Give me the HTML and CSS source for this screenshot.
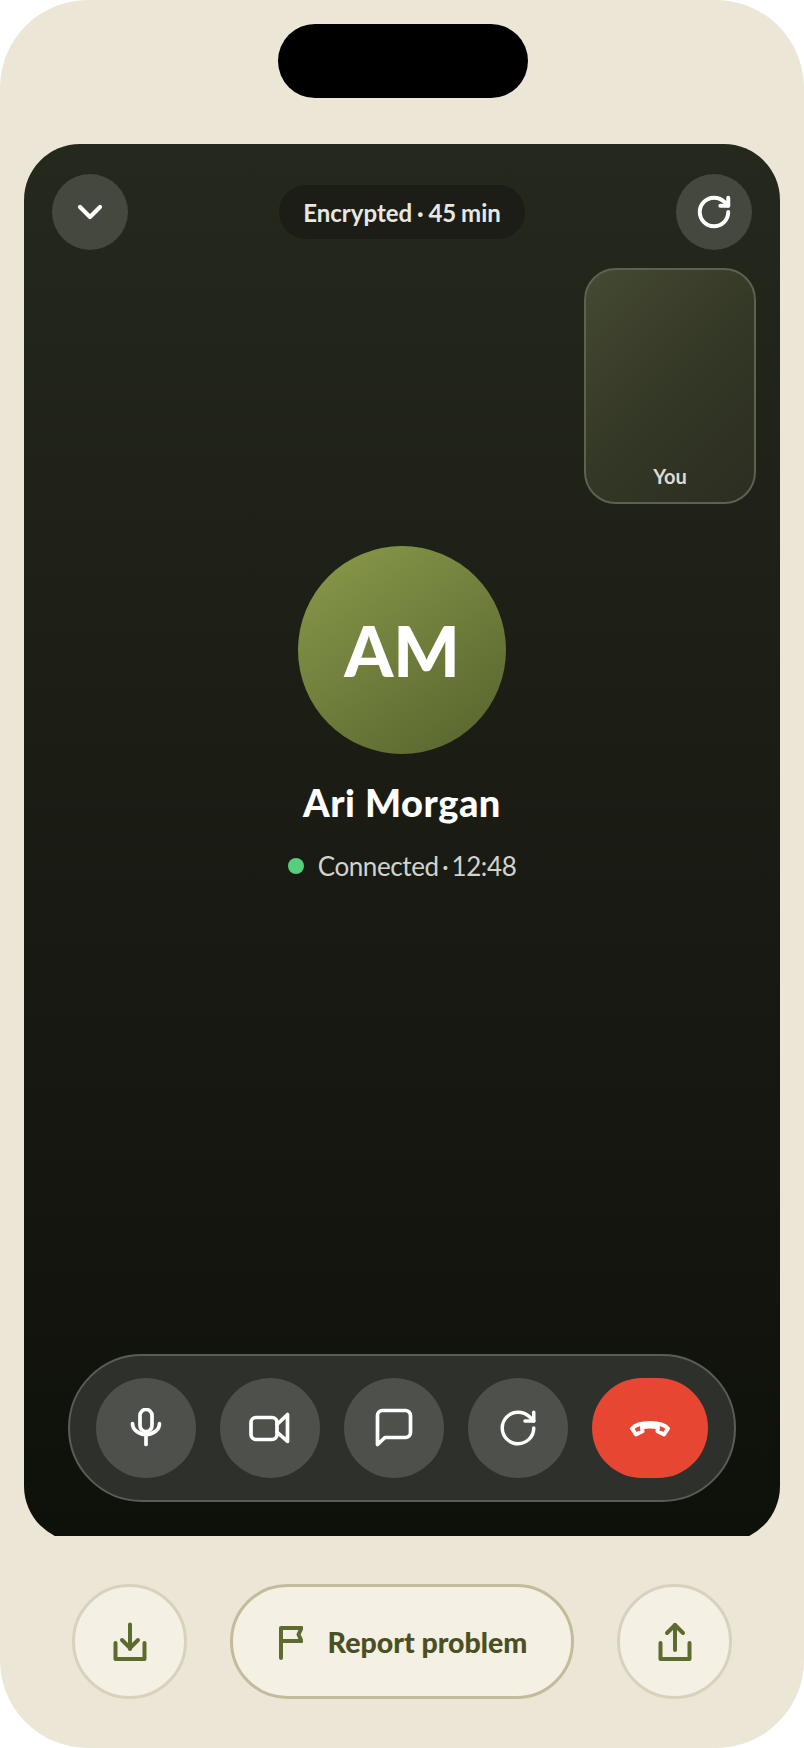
FILE: index.html
```html
<!DOCTYPE html>
<html lang="en">
<head>
  <meta charset="UTF-8">
  <meta name="viewport" content="width=device-width, initial-scale=1.0">
  <title>Call with Ari Morgan</title>
  <link rel="stylesheet" href="styles.css">
</head>
<body>
  <div class="phone">
    <div class="island"></div>

    <div class="screen-clip">
      <main class="screen">
        <header class="top-bar">
          <button class="round-btn top-btn" aria-label="Minimize">
            <svg class="icon" width="40" height="40" viewBox="0 0 24 24"><path d="m6 9 6 6 6-6"/></svg>
          </button>
          <div class="info-pill">Encrypted · 45 min</div>
          <button class="round-btn top-btn" aria-label="Flip">
            <svg class="icon" width="38" height="38" viewBox="0 0 24 24"><path d="M21 12a9 9 0 1 1-9-9c2.52 0 4.93 1 6.74 2.74L21 8"/><path d="M21 3v5h-5"/></svg>
          </button>
        </header>

        <div class="self-view"><span class="self-label">You</span></div>

        <section class="caller">
          <div class="avatar">AM</div>
          <h1 class="caller-name">Ari Morgan</h1>
          <p class="caller-status"><span class="status-dot"></span>Connected · 12:48</p>
        </section>

        <nav class="controls">
          <button class="round-btn control-btn" aria-label="Mute">
            <svg class="icon icon-thick" width="40" height="40" viewBox="0 0 40 40"><rect x="14" y="1.5" width="12" height="22" rx="6"/><path d="M6.5 15.5a13.5 11 0 0 0 27 0"/><path d="M20 26.5v10"/></svg>
          </button>
          <button class="round-btn control-btn" aria-label="Camera">
            <svg class="icon icon-thick" width="48" height="48" viewBox="0 0 48 48"><rect x="5" y="13.5" width="26" height="22" rx="5"/><path d="M31 20.5 41.5 10.5v27L31 28"/></svg>
          </button>
          <button class="round-btn control-btn" aria-label="Chat">
            <svg class="icon icon-thick" width="48" height="48" viewBox="0 0 48 48"><path d="M7.5 40.5v-29a5 5 0 0 1 5-5h23a5 5 0 0 1 5 5v17a5 5 0 0 1-5 5H15z"/></svg>
          </button>
          <button class="round-btn control-btn" aria-label="Flip camera">
            <svg class="icon icon-fine" width="42" height="42" viewBox="0 0 24 24"><path d="M21 12a9 9 0 1 1-9-9c2.52 0 4.93 1 6.74 2.74L21 8"/><path d="M21 3v5h-5"/></svg>
          </button>
          <button class="end-btn" aria-label="End call">
            <svg class="icon icon-end" width="48" height="48" viewBox="0 0 48 48"><path d="M6 24.5C10 19.8 17 19 24 19s14 .8 18 5.5l-4 6-6.5-3.2.5-3.8c-4-1-12-1-16 0l.5 3.8-6.500 3.200z"/></svg>
          </button>
        </nav>
      </main>
    </div>

    <footer class="actions">
      <button class="action-circle" aria-label="Download">
        <svg class="icon icon-olive" width="48" height="48" viewBox="0 0 48 48"><path d="M9.500 25v16h29V25"/><path d="M24 6.500V31"/><path d="m16 22 8 8 8-8"/></svg>
      </button>
      <button class="report-btn">
        <svg class="icon icon-olive" width="28" height="40" viewBox="0 0 28 40"><path d="M6 36V6h20.500l-3 6.500 3 6.500H6"/></svg>
        Report problem
      </button>
      <button class="action-circle" aria-label="Share">
        <svg class="icon icon-olive" width="48" height="48" viewBox="0 0 48 48"><path d="M9.500 25v16h29V25"/><path d="M24 7v25"/><path d="m16 15 8-8 8 8"/></svg>
      </button>
    </footer>
  </div>
</body>
</html>
```

FILE: styles.css
```css
body {
  margin: 0;
  background-color: #fff;
  font-family: Lato, "Noto Sans", sans-serif;
}

button {
  font-family: inherit;
  border: none;
  padding: 0;
  cursor: pointer;
}

.phone {
  width: 804px;
  height: 1748px;
  padding-top: 24px;
  box-sizing: border-box;
  background-color: #ece6d6;
  border-radius: 88px;
  overflow: hidden;
}

.island {
  width: 250px;
  height: 74px;
  margin: 0 0 46px 278px;
  background-color: #000;
  border-radius: 37px;
}

/* the screen runs a little past the bottom edge, so its corners get cut */
.screen-clip {
  height: 1392px;
  margin: 0 24px;
  overflow: hidden;
}

.screen {
  height: 1398px;
  display: flex;
  flex-direction: column;
  background: linear-gradient(180deg, #25281c 0%, #1b1d15 45%, #0e100a 100%);
  border-radius: 56px;
}

.icon {
  display: block;
  fill: none;
  stroke: #fff;
  stroke-width: 2.5;
  stroke-linecap: round;
  stroke-linejoin: round;
}

.icon-thick {
  stroke-width: 3.7;
}

.icon-fine {
  stroke-width: 2;
}

.icon-end {
  stroke-width: 4;
}

.icon-olive {
  stroke: #5c6b2e;
  stroke-width: 4;
}

.round-btn {
  display: flex;
  align-items: center;
  justify-content: center;
  border-radius: 50%;
  flex: none;
}

.top-bar {
  display: flex;
  align-items: center;
  justify-content: space-between;
  padding: 30px 28px 0;
}

.top-btn {
  width: 76px;
  height: 76px;
  background-color: #45483f;
}

.info-pill {
  height: 54px;
  padding: 0 24px;
  display: flex;
  align-items: center;
  background-color: #1b1d16;
  border-radius: 27px;
  color: #e8e8e2;
  font-size: 24px;
  font-weight: 700;
  word-spacing: -1px;
}

.self-view {
  align-self: flex-end;
  width: 172px;
  height: 236px;
  margin: 18px 24px 0 0;
  box-sizing: border-box;
  display: flex;
  align-items: flex-end;
  justify-content: center;
  padding-bottom: 14px;
  background: linear-gradient(135deg, #454a33 0%, #343826 50%, #2b2e21 100%);
  border: 2px solid #5d6150;
  border-radius: 32px;
}

.self-label {
  color: #dddcd4;
  font-size: 20px;
  font-weight: 700;
}

.caller {
  display: flex;
  flex-direction: column;
  align-items: center;
  margin-top: 42px;
}

.avatar {
  width: 208px;
  height: 208px;
  display: flex;
  align-items: center;
  justify-content: center;
  background: linear-gradient(145deg, #8a9a4b 0%, #55632c 100%);
  border-radius: 50%;
  color: #fff;
  font-size: 70px;
  font-weight: 900;
}

.caller-name {
  margin: 26px 0 0;
  color: #fff;
  font-size: 38px;
  line-height: 44px;
  font-weight: 900;
  letter-spacing: 0.5px;
}

.caller-status {
  display: flex;
  align-items: center;
  gap: 14px;
  margin: 24px 0 0;
  color: #d2d3cc;
  font-size: 26px;
  line-height: 36px;
  letter-spacing: -0.4px;
  word-spacing: -3px;
}

.status-dot {
  width: 16px;
  height: 16px;
  background-color: #55cf7d;
  border-radius: 50%;
}

.controls {
  align-self: center;
  margin-top: auto;
  margin-bottom: 40px;
  box-sizing: border-box;
  width: 668px;
  height: 148px;
  display: flex;
  align-items: center;
  justify-content: center;
  gap: 24px;
  background-color: #2e302c;
  border: 2px solid #5a5c57;
  border-radius: 74px;
}

.control-btn {
  width: 100px;
  height: 100px;
  background-color: #4e504b;
}

.end-btn {
  width: 116px;
  height: 100px;
  display: flex;
  align-items: center;
  justify-content: center;
  background-color: #e64632;
  border-radius: 50px;
}

.actions {
  display: flex;
  align-items: center;
  justify-content: center;
  gap: 43px;
  margin-top: 48px;
}

.action-circle {
  width: 115px;
  height: 115px;
  display: flex;
  align-items: center;
  justify-content: center;
  background-color: #f4f0e3;
  border: 3px solid #d8d2bd;
  border-radius: 50%;
}

.report-btn {
  width: 344px;
  height: 115px;
  padding-right: 2px;
  display: flex;
  align-items: center;
  justify-content: center;
  gap: 25px;
  background-color: #f4f0e3;
  border: 3px solid #c3bc9a;
  border-radius: 58px;
  color: #4a4f24;
  font-size: 28.5px;
  font-weight: 900;
}
```
